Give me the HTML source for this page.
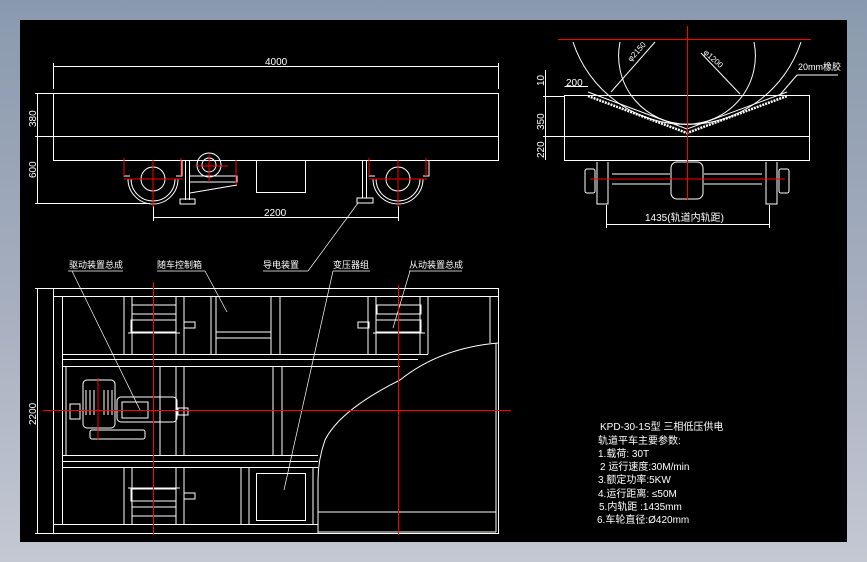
<!DOCTYPE html>
<html><head><meta charset="utf-8"><style>
html,body{margin:0;padding:0;width:867px;height:562px;overflow:hidden;background:linear-gradient(180deg,#8a9aae 0%,#a4adbd 50%,#c4c8d3 100%);}
svg{position:absolute;left:0;top:0}
text{font-family:"Liberation Sans","Noto Sans CJK SC",sans-serif;fill:#fff}
</style></head><body>
<svg width="867" height="562" viewBox="0 0 867 562">
<rect x="20" y="20" width="827" height="522" fill="#000"/>
<g stroke="#fff" stroke-width="1" fill="none">
<!-- top-left view -->
<line x1="53.5" y1="66.5" x2="498.5" y2="66.5"/>
<line x1="53.5" y1="63" x2="53.5" y2="89"/><line x1="498.5" y1="63" x2="498.5" y2="89"/>
<rect x="53.5" y="93.5" width="445" height="67"/>
<line x1="53.5" y1="136.5" x2="498.5" y2="136.5"/>
<line x1="37.5" y1="94" x2="37.5" y2="203"/>
<line x1="35" y1="93.5" x2="53" y2="93.5"/><line x1="35" y1="136.5" x2="53" y2="136.5"/><line x1="35" y1="203.5" x2="150" y2="203.5"/>
<circle cx="153" cy="179" r="12"/>
<path d="M128 179 A25 25 0 0 0 178 179"/><path d="M131 179 A22 22 0 0 0 175 179"/>
<path d="M124 161 V176 H130 M182 161 V176 H176"/>
<line x1="185.5" y1="161" x2="185.5" y2="200"/><line x1="189.5" y1="161" x2="189.5" y2="200"/>
<rect x="180" y="199" width="15" height="5"/>
<circle cx="209" cy="165" r="7"/><circle cx="209" cy="165" r="12"/>
<path d="M190 182 H237 V176 H190 M190 193 L237 185"/>
<rect x="256.5" y="160.5" width="49" height="32"/>
<circle cx="398" cy="179" r="12"/>
<path d="M373 179 A25 25 0 0 0 423 179"/><path d="M376 179 A22 22 0 0 0 420 179"/>
<path d="M369 161 V176 H375 M429 161 V176 H423"/>
<line x1="362.5" y1="161" x2="362.5" y2="198"/><line x1="366.5" y1="161" x2="366.5" y2="198"/>
<rect x="357" y="198" width="16" height="5"/>
<line x1="153.5" y1="217.5" x2="398.5" y2="217.5"/>
<line x1="153.5" y1="206" x2="153.5" y2="221"/><line x1="398.5" y1="206" x2="398.5" y2="221"/>
<line x1="358" y1="203" x2="308" y2="271" stroke-width="0.7"/>
<!-- top-right view -->
<path d="M573 42 A120 120 0 0 0 801 42" />
<path d="M620 42 A68.4 68.4 0 1 0 754 42"/>
<rect x="564.5" y="95.5" width="245" height="65"/>
<line x1="564.5" y1="136.5" x2="809.5" y2="136.5"/>
<path d="M588 96 L687 133 L787 96" stroke-width="2.5" stroke-dasharray="2 1"/>
<path d="M588 92 L687 129 L787 92" stroke-width="1"/>
<line x1="545.5" y1="70" x2="545.5" y2="160"/>
<line x1="543" y1="96.5" x2="565" y2="96.5"/><line x1="543" y1="136.5" x2="565" y2="136.5"/>
<line x1="564.5" y1="86.5" x2="588" y2="86.5"/>
<line x1="655" y1="42" x2="611" y2="92"/><line x1="701" y1="53" x2="740" y2="94"/>
<line x1="797" y1="75" x2="779" y2="96"/><line x1="797" y1="75" x2="838" y2="75"/>
<rect x="585" y="169" width="10" height="24" rx="2"/><rect x="779" y="169" width="10" height="24" rx="2"/>
<path d="M597 162 V204 H608 V162 M766 162 V204 H777 V162"/>
<path d="M612 174 H670 M612 184 H670 M704 174 H762 M704 184 H762"/>
<rect x="671" y="162" width="32" height="37" rx="6"/>
<line x1="606.5" y1="224.5" x2="769.5" y2="224.5"/>
<line x1="606.5" y1="205" x2="606.5" y2="228"/><line x1="769.5" y1="205" x2="769.5" y2="228"/>
<!-- plan view -->
<rect x="53.5" y="288.5" width="445" height="245"/>
<line x1="53.5" y1="296.5" x2="498.5" y2="296.5"/>
<line x1="62.5" y1="296.5" x2="62.5" y2="524.5"/>
<line x1="53.5" y1="524.5" x2="318" y2="524.5"/>
<path d="M62 354.5 H428 M62 359.5 H418 M62 366.5 H400"/>
<path d="M62 455.5 H318 M62 461.5 H318 M62 467.5 H318"/>
<path d="M124 297 V354 M132 297 V354 M176 297 V354 M184 297 V354"/>
<path d="M124 467 V524 M132 467 V524 M176 467 V524 M184 467 V524"/>
<path d="M160 367 V455 M176 367 V455 M184 367 V455 M66 367 V455"/>
<path d="M211 297 V354 M216 297 V354 M271 297 V354 M280 297 V354 M216 332 H271 M216 338 H271"/>
<path d="M273 367 V455 M282 367 V455"/>
<path d="M368 297 V354 M376 297 V354 M420 297 V354 M428 297 V354 M490 297 V343"/>
<path d="M241 467 V524 M249 467 V524 M313 467 V524"/>
<rect x="256.5" y="473.5" width="49" height="47"/>
<path d="M498 343 Q440 348 400 380 Q340 410 325 440 Q318 460 318 480 V533"/>
<path d="M318 512 H496 M318 532 H496 M496 343 V532"/>
<rect x="132" y="305" width="44" height="9"/><rect x="131" y="320" width="45" height="12"/><line x1="128" y1="333" x2="180" y2="333"/>
<rect x="184" y="322" width="11" height="6"/>
<rect x="377" y="305" width="44" height="9"/><rect x="376" y="320" width="45" height="12"/><line x1="373" y1="333" x2="425" y2="333"/>
<rect x="358" y="322" width="11" height="6"/>
<rect x="132" y="507" width="44" height="9"/><rect x="131" y="489" width="45" height="12"/><line x1="128" y1="488" x2="180" y2="488"/>
<rect x="184" y="493" width="11" height="6"/>
<rect x="83" y="380" width="32" height="48" rx="4"/>
<path d="M86 390 V415 M90 390 V415 M94 390 V415 M104 390 V415 M108 390 V415 M112 390 V415"/>
<rect x="117" y="397" width="60" height="25" rx="4"/><rect x="122" y="402" width="26" height="16"/>
<rect x="90" y="430" width="55" height="9" rx="2"/>
<rect x="70" y="404" width="10" height="15"/><rect x="178" y="408" width="10" height="7"/>
<line x1="37.5" y1="289" x2="37.5" y2="533"/>
<line x1="35" y1="288.5" x2="53" y2="288.5"/><line x1="35" y1="533.5" x2="53" y2="533.5"/>
<g stroke-width="0.7">
<line x1="68" y1="271" x2="123" y2="271"/><line x1="72" y1="271" x2="140" y2="410"/>
<line x1="157" y1="271" x2="205" y2="271"/><line x1="205" y1="271" x2="227" y2="312"/>
<line x1="263" y1="271" x2="308" y2="271"/>
<line x1="333" y1="271" x2="370" y2="271"/><line x1="333" y1="271" x2="284" y2="490"/>
<line x1="409" y1="271" x2="462" y2="271"/><line x1="410" y1="271" x2="393" y2="328"/>
</g>
</g>
<g stroke="#ff0000" stroke-width="1" fill="none">
<path d="M153 160 V207 M124 179 H183 M398 160 V207 M369 179 H427 M209 155 V182 M195 166 H228"/>
<path d="M124 158 V176 M181 158 V176 M369 158 V176 M426 158 V176 M236 160 V185"/>
<path d="M558 39.5 H811 M687.5 26 V200 M590 179 H785"/>
<path d="M43 410.5 H511 M153.5 282 V535 M398.5 285 V535 M98 378 V440"/>
</g>
<g font-size="10">
<text x="265" y="65">4000</text>
<text x="264" y="216">2200</text>
<text x="0" y="0" transform="translate(36,127) rotate(-90)">380</text>
<text x="0" y="0" transform="translate(36,178) rotate(-90)">600</text>
<text x="0" y="0" transform="translate(36,425) rotate(-90)">2200</text>
<text x="0" y="0" transform="translate(544,86) rotate(-90)">10</text>
<text x="0" y="0" transform="translate(544,130) rotate(-90)">350</text>
<text x="0" y="0" transform="translate(544,158) rotate(-90)">220</text>
<text x="566" y="86">200</text>
<text x="0" y="0" font-size="8" transform="translate(631,62) rotate(-48)">φ2150</text>
<text x="0" y="0" font-size="8" transform="translate(703,53) rotate(42)">φ1200</text>
<text x="798" y="70" font-size="9">20mm橡胶</text>
<text x="645" y="221">1435(轨道内轨距)</text>
<g font-size="9">
<text x="69" y="268">驱动装置总成</text>
<text x="157" y="268">随车控制箱</text>
<text x="263" y="268">导电装置</text>
<text x="333" y="268">变压器组</text>
<text x="409" y="268">从动装置总成</text>
</g>
<text x="600" y="430">KPD-30-1S型 三相低压供电</text>
<text x="598" y="444">轨道平车主要参数:</text>
<text x="598" y="457">1.载荷: 30T</text>
<text x="600" y="470">2 运行速度:30M/min</text>
<text x="598" y="483">3.额定功率:5KW</text>
<text x="598" y="497">4.运行距离: ≤50M</text>
<text x="599" y="510">5.内轨距 :1435mm</text>
<text x="597" y="523">6.车轮直径:Ø420mm</text>
</g>
</svg>
</body></html>
